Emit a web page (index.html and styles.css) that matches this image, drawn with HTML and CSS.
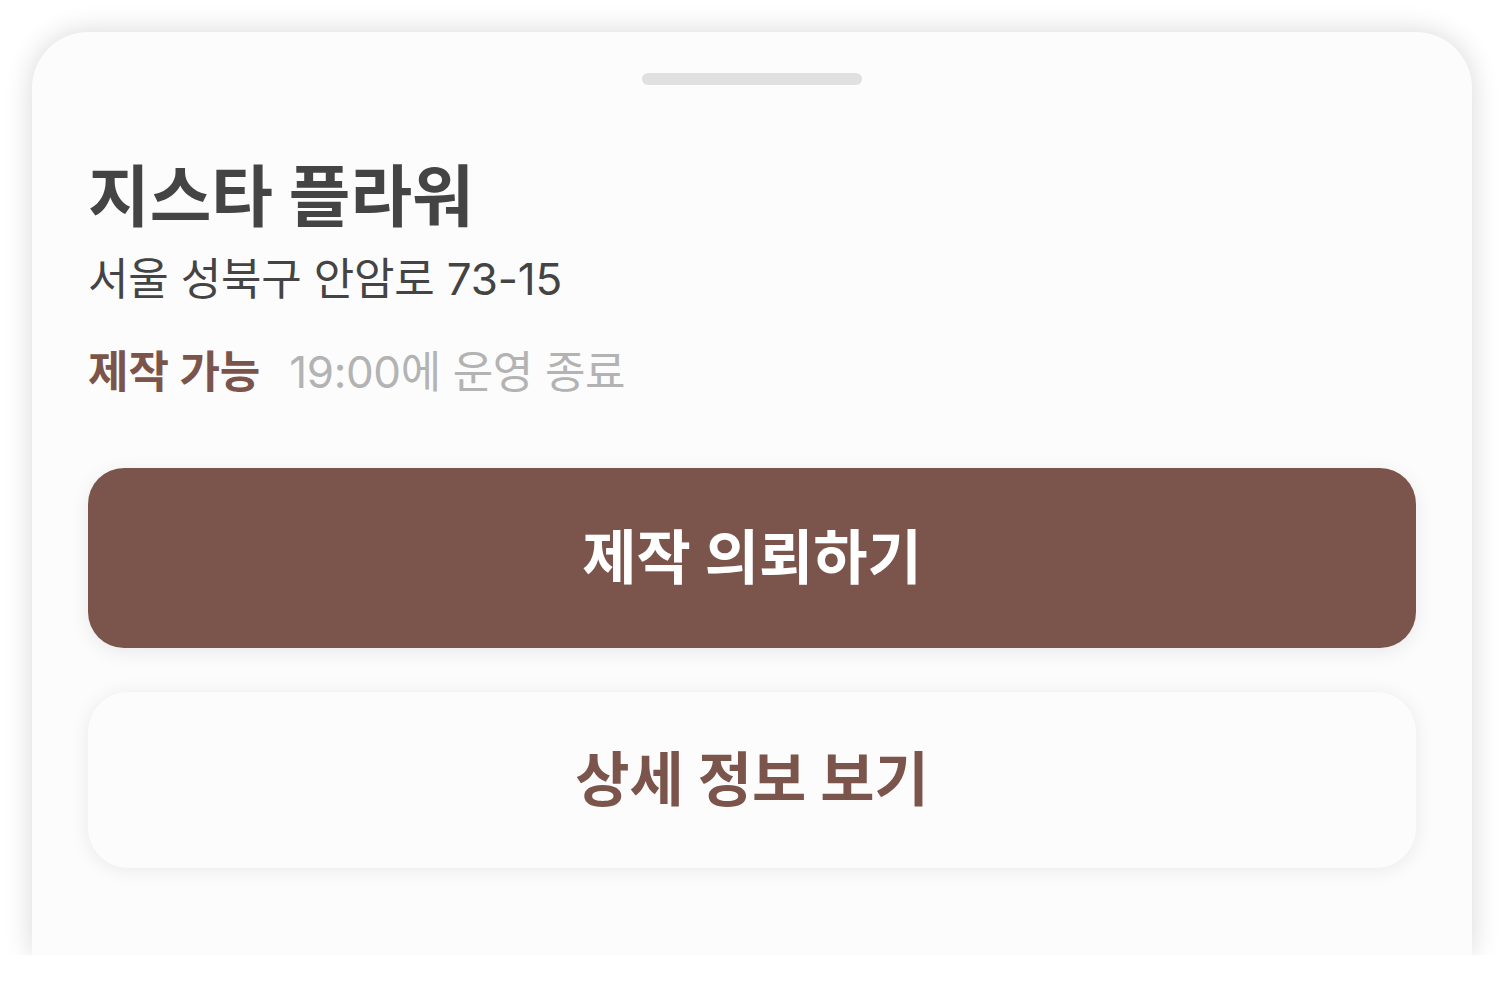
FILE: index.html
```html
<!DOCTYPE html>
<html lang="ko">
<head>
<meta charset="utf-8">
<link rel="stylesheet" href="styles.css">
</head>
<body>
<div class="sheet">
  <div class="handle"></div>
  <div class="info">
    <h1 class="title">지스타 플라워</h1>
    <p class="address">서울 성북구 안암로 73-15</p>
    <p class="status"><span class="avail">제작 가능</span><span class="hours">19:00에 운영 종료</span></p>
  </div>
  <div class="actions">
    <button class="btn primary">제작 의뢰하기</button>
    <button class="btn secondary">상세 정보 보기</button>
  </div>
</div>
</body>
</html>
```
FILE: styles.css
```css
html, body {
  margin: 0;
  padding: 0;
  background: #ffffff;
}
body {
  padding: 32px 32px 0 32px;
  font-family: "Inter", "Noto Sans CJK KR", sans-serif;
}
.sheet {
  width: 1440px;
  height: 923px;
  box-sizing: border-box;
  background: #fcfcfc;
  border-radius: 56px 56px 0 0;
  box-shadow: 0 0 28px rgba(0, 0, 0, 0.16);
  padding: 41px 56px 0 56px;
  display: flex;
  flex-direction: column;
}
.handle {
  align-self: center;
  width: 220px;
  height: 12px;
  border-radius: 6px;
  background: #e0e0e0;
}
.info {
  margin-top: 70px;
  display: flex;
  flex-direction: column;
}
.title {
  margin: 0;
  font-size: 67px;
  font-weight: 700;
  color: #444444;
  line-height: 84px;
  letter-spacing: 0;
}
.address {
  margin: 12px 0 0 0;
  font-size: 44px;
  font-weight: 400;
  color: #444444;
  line-height: 56px;
  letter-spacing: -0.2px;
}
.status {
  margin: 37px 0 0 0;
  font-size: 44px;
  line-height: 56px;
  display: flex;
  gap: 29px;
}
.avail {
  color: #7b554b;
  font-weight: 700;
}
.hours {
  color: #b3b3b3;
  font-weight: 400;
  letter-spacing: -0.4px;
}
.actions {
  margin-top: 68px;
  display: flex;
  flex-direction: column;
  gap: 44px;
}
.btn {
  width: 100%;
  border: none;
  font-family: inherit;
  font-weight: 700;
  font-size: 59px;
  padding: 0 0 10px 0;
  display: flex;
  align-items: center;
  justify-content: center;
}
.primary {
  height: 180px;
  border-radius: 36px;
  background: #7b554b;
  color: #ffffff;
  box-shadow: 0 4px 20px rgba(0, 0, 0, 0.08);
}
.secondary {
  height: 176px;
  border-radius: 40px;
  background: #fcfcfc;
  color: #7b554b;
  box-shadow: 0 2px 20px rgba(0, 0, 0, 0.08);
}
```
